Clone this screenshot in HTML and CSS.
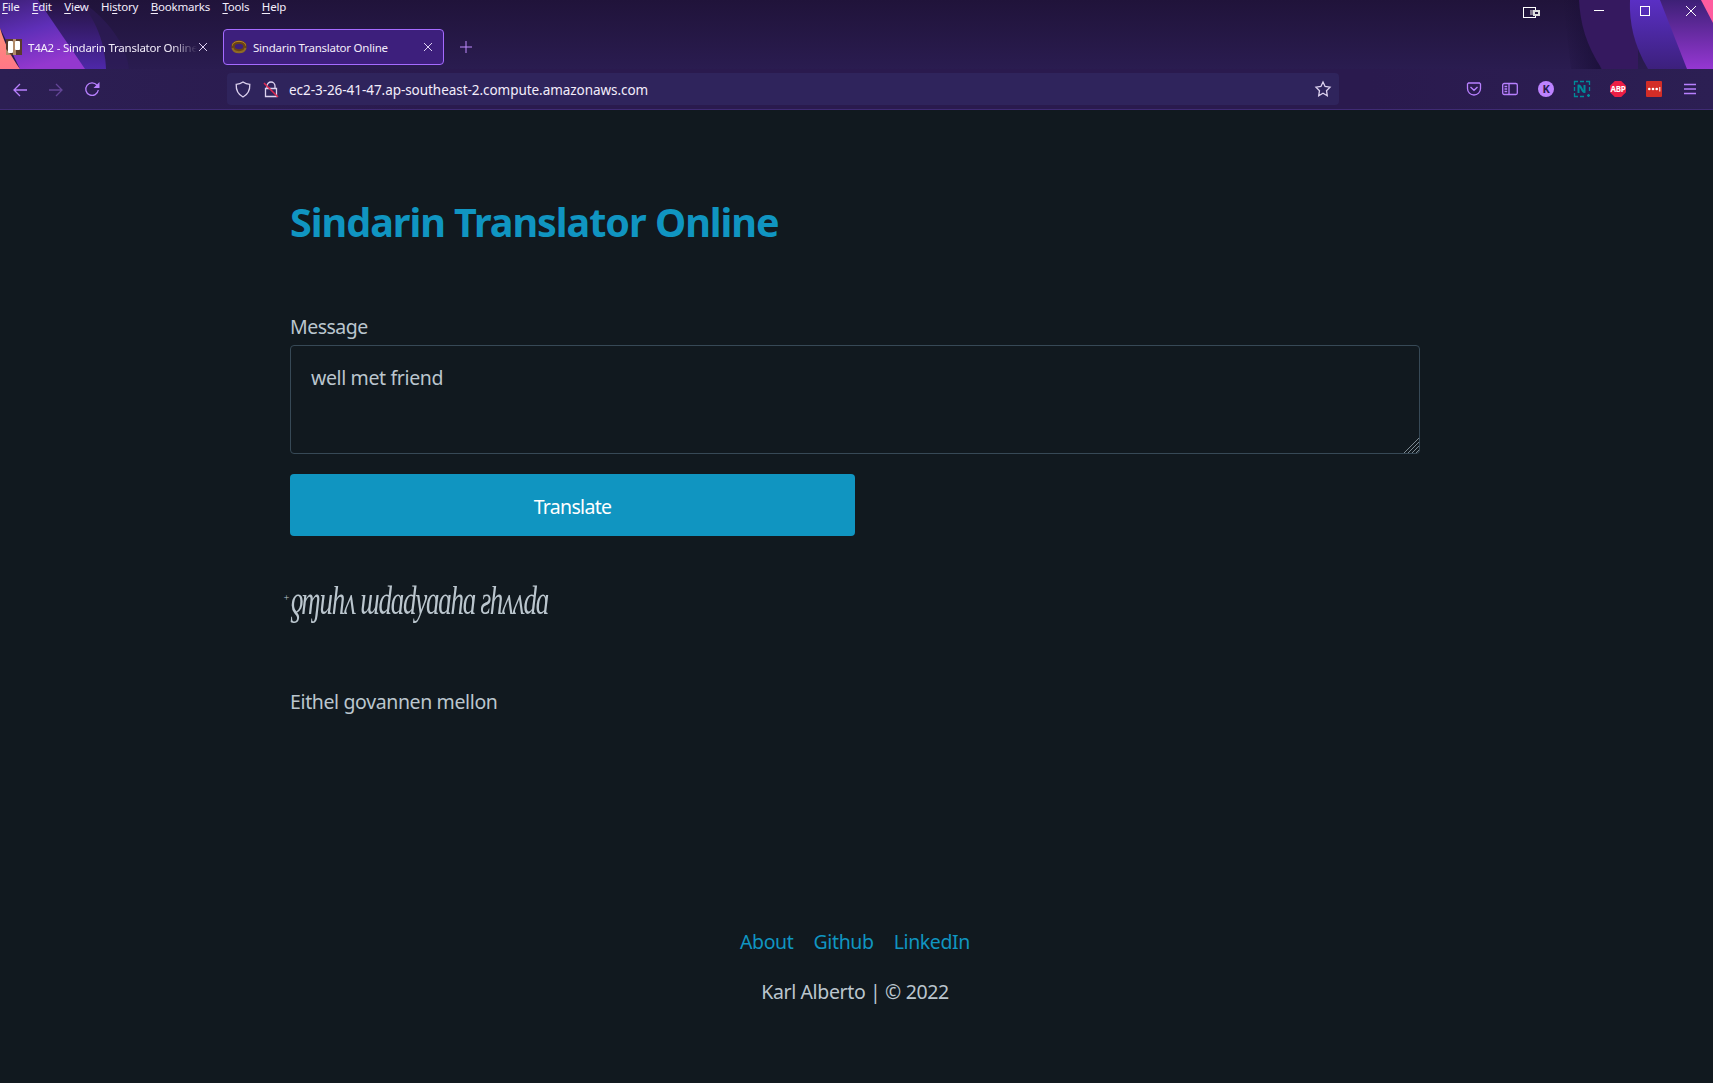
FILE: index.html
```html
<!DOCTYPE html>
<html lang="en">
<head>
<meta charset="utf-8">
<title>Sindarin Translator Online</title>
<link rel="stylesheet" href="styles.css">
</head>
<body>
<header class="browser">
  <div class="titlebar">
    <svg class="art art-left" width="140" height="69" viewBox="0 0 140 69">
      <defs>
        <linearGradient id="al" x1="0" y1="0" x2=".35" y2="1"><stop offset="0" stop-color="#3e2079"/><stop offset=".5" stop-color="#5f2fb8"/><stop offset="1" stop-color="#9438cf"/></linearGradient>
        <linearGradient id="bl" x1="0" y1="0" x2="0" y2="1"><stop offset="0" stop-color="#24133f"/><stop offset="1" stop-color="#4e28a8"/></linearGradient>
        <linearGradient id="cl" x1="0" y1="0" x2="0" y2="1"><stop offset="0" stop-color="#ff9078"/><stop offset="1" stop-color="#ff7787"/></linearGradient>
      </defs>
      <path d="M80 0C112 22 127 48 129 69H90Z" fill="#301b5d" opacity=".5"/>
      <path d="M38 0H78C96 18 105 44 106 69H84Z" fill="url(#bl)"/>
      <path d="M0 0H38L85 69H20L0 28Z" fill="url(#al)"/>
      <path d="M0 28C5 45 12 58 20 69H0Z" fill="url(#cl)"/>
    </svg>
    <svg class="art art-right" width="150" height="69" viewBox="0 0 150 69">
      <defs>
        <linearGradient id="ar" x1="0" y1="0" x2="0" y2="1"><stop offset="0" stop-color="#3d2076"/><stop offset="1" stop-color="#9537d2"/></linearGradient>
        <linearGradient id="br" x1="0" y1="0" x2="0" y2="1"><stop offset="0" stop-color="#5a2fc4"/><stop offset="1" stop-color="#3c207c"/></linearGradient>
        <linearGradient id="sr"><stop offset="0" stop-color="#170c34" stop-opacity="0"/><stop offset="1" stop-color="#170c34"/></linearGradient>
      </defs>
      <path d="M0 0H16L38 69H8Z" fill="url(#sr)" opacity=".7"/>
      <path d="M16 0H75V69H39C23 46 17 22 16 0Z" fill="#35195f"/>
      <path d="M67 0H100L125 69H85C71 46 66 22 67 0Z" fill="url(#br)"/>
      <path d="M97 0H150V69H124Z" fill="url(#ar)"/>
      <path d="M138 0H150V23Z" fill="#ff5c9f"/>
    </svg>
    <nav class="menu">
      <span><u>F</u>ile</span><span><u>E</u>dit</span><span><u>V</u>iew</span><span>Hi<u>s</u>tory</span><span><u>B</u>ookmarks</span><span><u>T</u>ools</span><span><u>H</u>elp</span>
    </nav>
    <div class="tabs">
      <div class="tab">
        <svg width="16" height="16"><rect width="16" height="16" fill="#5a3a2c"/><path d="M0 10l5 6H0zM7 0h3v16H7z" fill="#b38c6b"/><rect x="2" y="2" width="5" height="12" rx="1" fill="#fff"/><rect x="9" y="2" width="5" height="9" rx="1" fill="#fff"/></svg>
        <span class="tab-title fade">T4A2 - Sindarin Translator Online</span>
        <svg class="close" width="10" height="10"><path d="M1 1l8 8M9 1l-8 8"/></svg>
      </div>
      <div class="tab active">
        <svg width="16" height="16"><ellipse cx="8" cy="7.500" rx="6" ry="4.500" fill="none" stroke="#6b4413" stroke-width="3.500"/><path d="M1.500 6.500C1 1 15 1 14.500 6.500" fill="none" stroke="#b98327"/><path d="M1.500 9c1 5.500 12 5.500 13 0" fill="none" stroke="#8f6a25" stroke-width="2"/></svg>
        <span class="tab-title">Sindarin Translator Online</span>
        <svg class="close" width="10" height="10"><path d="M1 1l8 8M9 1l-8 8"/></svg>
      </div>
      <svg class="plus" width="12" height="12"><path d="M6 0v12M0 6h12"/></svg>
    </div>
    <div class="window-controls">
      <svg width="16" height="11" fill="none"><path d="M12 9v1H.5V.5H12V3" stroke="#fff" /><rect x="7" y="3" width="3" height="5" fill="#82798f" stroke="none"/><rect x="10.500" y="3.500" width="5" height="4" stroke="#ddd" stroke-width="2"/></svg>
      <svg width="10" height="10"><path d="M0 4.500h10"/></svg>
      <svg width="10" height="10"><rect x=".5" y=".5" width="9" height="9"/></svg>
      <svg width="10" height="10"><path d="M0 0l10 10M10 0L0 10"/></svg>
    </div>
  </div>
  <div class="toolbar">
    <div class="nav-icons">
      <svg width="14" height="14"><path d="M14 7H1M7 1L1 7l6 6"/></svg>
      <svg class="dim" width="14" height="14"><path d="M0 7h13M7 1l6 6-6 6"/></svg>
      <svg width="15" height="15"><path d="M12 3.200A6.300 6.300 0 1 0 13.300 8"/><path d="M14.500 0v6h-6z" fill="#b880ff" stroke="none"/></svg>
    </div>
    <div class="urlbar">
      <svg width="16" height="17"><path d="M8 1C6 2.500 3.500 3.200 1.200 3.300 1 8 2 13 8 16c6-3 7-8 6.800-12.700C12.500 3.200 10 2.500 8 1Z"/></svg>
      <svg class="lock" width="16" height="17"><path d="M4 8V5a4 4 0 0 1 8 0v3M2.500 15.500v-8h11v8z"/><path d="M1 2l14 14" stroke="#e22850" stroke-width="1.500"/></svg>
      <span class="url">ec2-3-26-41-47.ap-southeast-2.compute.amazonaws.com</span>
      <svg class="star" width="16" height="16"><path d="M8 1l2.100 4.500 4.900.7-3.500 3.500.8 5L8 12.300l-4.300 2.400.8-5L1 6.200l4.900-.7Z"/></svg>
    </div>
    <div class="extensions">
      <svg width="16" height="16"><path d="M2.500 2h11l1 1v4.500a6.500 6.500 0 0 1-13 0V3ZM4.500 6L8 9.300 11.500 6"/></svg>
      <svg width="16" height="16"><rect x=".7" y="2.500" width="14.600" height="11" rx="1.500"/><path d="M7 2.500v11M2.500 5.500h2.700M2.500 8h2.700M2.500 10.500h2.700"/></svg>
      <span class="ext account">K</span>
      <svg width="16" height="16"><path d="M.5 4V.5H4M6 .5h4M12 .5h3.500V4M.5 6v4M.5 12v3.500H4M6 15.500h4M15.500 6v4M13 14.500h3M14.500 13v3" stroke="#008b98"/><path d="M4.500 12V4.500c3-1 3 7 6 6.500V4" stroke="#008b98" stroke-width="2"/></svg>
      <span class="ext abp">ABP</span>
      <svg width="16" height="16" stroke="none"><rect width="16" height="16" rx="1" fill="#d32d27"/><circle cx="3.300" cy="8" r="1.300" fill="#fff"/><circle cx="7" cy="8" r="1.300" fill="#fff"/><circle cx="10.700" cy="8" r="1.300" fill="#fff"/><path fill="#fff" d="M13.300 6h1v4.500h-1z"/></svg>
      <svg class="burger" width="12" height="12"><path d="M0 1.500h12M0 6h12M0 10.500h12"/></svg>
    </div>
  </div>
</header>
<main class="page">
  <h1>Sindarin Translator Online</h1>
  <label for="message">Message</label>
  <div class="field">
    <textarea id="message">well met friend</textarea>
    <svg class="grip" width="15" height="15"><path d="M0 15L15 0M4 15L15 4M8 15l7-7M12 15l3-3"/></svg>
  </div>
  <button type="button">Translate</button>
  <p class="tengwar"><sup>+</sup><span>ƍɱuhʌ ɯdɑdyɑɑhɑ ƨhʌʌdɑ</span></p>
  <p class="result">Eithel govannen mellon</p>
  <footer>
    <nav><a>About</a><a>Github</a><a>LinkedIn</a></nav>
    <p>Karl Alberto | © 2022</p>
  </footer>
</main>
</body>
</html>
```
FILE: styles.css
```css
* { box-sizing: border-box; }
body { margin: 0; height: 1083px; overflow: hidden; background: #11191f; color: #bbc6ce; font: 19.5px/30px "Noto Sans", "Open Sans", sans-serif; letter-spacing: -.37px; }
svg { display: block; flex: none; overflow: visible; }
.browser { height: 110px; color: #f3edfb; border-bottom: 1px solid #3f2b74; background: #291d4f; letter-spacing: -.24px; }
.titlebar { position: relative; height: 69px; background: linear-gradient(#20133a, #2a1c50); }
.art { position: absolute; top: 0; }
.art-left { left: 0; }
.art-right { right: 0; }
.menu { position: relative; display: flex; gap: 12.4px; height: 16px; padding-left: 2px; font-size: 11.5px; line-height: 14px; letter-spacing: -.2px; }
.menu u { text-underline-offset: 2px; }
.tabs { position: relative; display: flex; align-items: center; height: 36px; margin-top: 13px; }
.tab { display: flex; align-items: center; width: 221px; height: 36px; padding: 0 10px 0 7px; border: 1px solid transparent; border-radius: 4px; font-size: 11.5px; }
.tab:first-child { width: 223px; padding: 0 14px 0 5px; }
.tab.active { background: #3d1f7c; border-color: #a56bff; }
.tab-title { flex: 1; margin: 2px 1px 0 6px; white-space: nowrap; overflow: hidden; }
.fade { mask-image: linear-gradient(90deg, #000 85%, transparent); }
.close { fill: none; stroke: #ddd0f2; }
.plus { margin-left: 16px; stroke: #c08cff; fill: none; }
.window-controls { position: absolute; top: 6px; right: 17px; display: flex; align-items: flex-start; gap: 36px; stroke: #fff; fill: none; }
.window-controls svg:first-child { margin: 1px 19px 0 0; }
.window-controls rect, .window-controls path { shape-rendering: crispEdges; }
.toolbar { display: flex; align-items: center; height: 40px; background: linear-gradient(90deg, #2c1f53, #2a1a4e 25%, #2a1a4e 80%, #2c1f53); fill: none; stroke: #b880ff; stroke-width: 1.3; }
.nav-icons { display: flex; align-items: center; gap: 22px; width: 227px; padding: 1px 0 0 13px; }
.dim { opacity: .4; }
.urlbar { display: flex; align-items: center; width: 1112px; height: 32px; padding: 0 8px; border-radius: 4px; background: #2f245c; stroke: #ddd2ef; }
.lock { margin: 0 10px 0 12px; }
.url { flex: 1; padding-top: 2px; font-size: 13.5px; letter-spacing: -.05px; }
.extensions { display: flex; align-items: center; gap: 20px; margin-left: auto; padding-right: 17px; }
.burger { margin-left: 2px; }
.ext { display: flex; align-items: center; justify-content: center; width: 16px; height: 16px; font-weight: 700; line-height: 16px; }
.account { border-radius: 50%; background: #bd83ff; color: #291a4e; font-size: 11px; }
.abp { background: #ed1e45; color: #fff; font-size: 8px; clip-path: polygon(30% 0, 70% 0, 100% 30%, 100% 70%, 70% 100%, 30% 100%, 0 70%, 0 30%); }
.page { display: flex; flex-direction: column; width: 1130px; margin-left: 290px; }
h1 { margin: 87px 0 65px; color: #1095c1; font-size: 39.5px; line-height: 50px; font-weight: 700; letter-spacing: -1.02px; }
label { height: 33px; letter-spacing: -.5px; }
.field { position: relative; height: 109px; }
textarea { display: block; width: 100%; height: 109px; padding: 17px 20px; resize: none; border: 1px solid #374956; border-radius: 4px; background: transparent; color: #bbc6ce; font: inherit; letter-spacing: inherit; outline: 0; }
.grip { position: absolute; right: 1px; bottom: 1px; stroke: #7e8a92; fill: none; }
button { width: 565px; height: 62px; margin-top: 20px; padding: 4px 0 0; border: 0; border-radius: 4px; background: #1095c1; color: #fff; font: inherit; letter-spacing: -.7px; }
.tengwar { display: flex; height: 70px; margin: 38px 0 0 -7px; font: italic 27px/60px "Liberation Serif", "DejaVu Serif", serif; white-space: nowrap; }
.tengwar sup { width: 7px; font-size: 10px; line-height: 48px; }
.tengwar span { letter-spacing: -1.25px; transform: scaleY(1.45); transform-origin: 0 36px; }
.result { margin: 43px 0 0; }
footer { margin-top: 210px; text-align: center; }
footer nav { display: flex; justify-content: center; gap: 20px; color: #1095c1; }
footer p { margin: 20px 0 0; }
```
